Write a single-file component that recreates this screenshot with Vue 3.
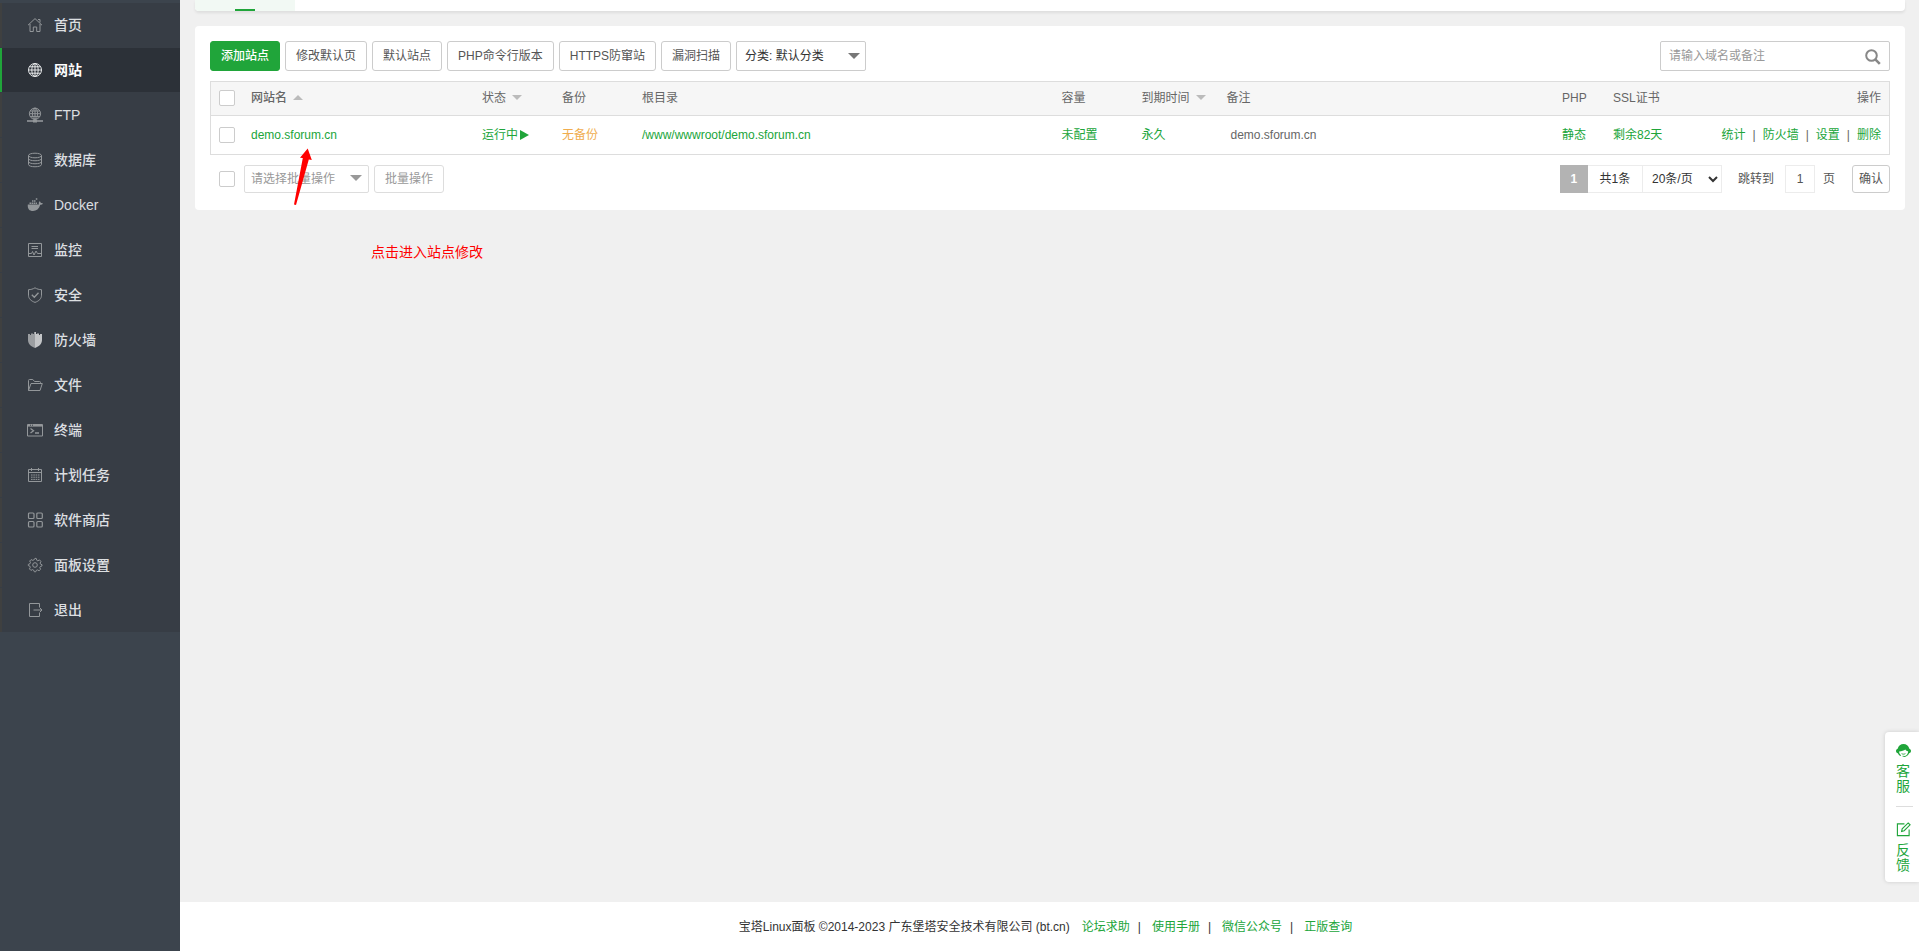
<script setup>
import { ref } from 'vue'

const menu = [
  { id: 'home', label: '首页' },
  { id: 'site', label: '网站', active: true },
  { id: 'ftp', label: 'FTP' },
  { id: 'database', label: '数据库' },
  { id: 'docker', label: 'Docker' },
  { id: 'monitor', label: '监控' },
  { id: 'safe', label: '安全' },
  { id: 'firewall', label: '防火墙' },
  { id: 'files', label: '文件' },
  { id: 'terminal', label: '终端' },
  { id: 'cron', label: '计划任务' },
  { id: 'store', label: '软件商店' },
  { id: 'settings', label: '面板设置' },
  { id: 'logout', label: '退出' }
]
const actions = ['修改默认页', '默认站点', 'PHP命令行版本', 'HTTPS防窜站', '漏洞扫描']
const operations = ['统计', '防火墙', '设置', '删除']
const footerLinks = ['论坛求助', '使用手册', '微信公众号', '正版查询']
const keyword = ref('')
const page = ref('1')
</script>

<template>
  <div class="layout">
    <aside class="sidebar">
      <nav class="menu">
        <a v-for="m in menu" :key="m.id" href="#" class="item" :class="{ active: m.active }">
          <svg class="icon" viewBox="0 0 16 16" fill="none" stroke="currentColor" stroke-width="1">
            <template v-if="m.id === 'home'">
              <path d="M1 8.2 8 1.6l7 6.6M3 7v7.5h3.3V10h3.4v4.5H13V7M11 2.5h2v3" />
            </template>
            <template v-else-if="m.id === 'site'">
              <circle cx="8" cy="8" r="6.5" />
              <ellipse cx="8" cy="8" rx="3.2" ry="6.5" />
              <path d="M8 1.5v13M1.5 8h13M2.4 4.8h11.2M2.4 11.2h11.2" />
            </template>
            <template v-else-if="m.id === 'ftp'">
              <circle cx="8" cy="6.7" r="5.6" />
              <ellipse cx="8" cy="6.7" rx="2.6" ry="5.6" />
              <path d="M8 1v11M2.4 6.7h11.2M3.2 4h9.6M3.2 9.4h9.6" />
              <path d="M0 14h16" stroke-width="1.6" />
              <path d="M6 14h4" stroke-width="3" />
            </template>
            <template v-else-if="m.id === 'database'">
              <ellipse cx="8" cy="3.5" rx="6.5" ry="2.3" />
              <path d="M1.5 3.5v9c0 3 13 3 13 0v-9M1.5 6.5c0 3 13 3 13 0M1.5 9.5c0 3 13 3 13 0" />
            </template>
            <template v-else-if="m.id === 'docker'">
              <path d="M.8 7.500H12c-.5-1.600-.1-2.600.7-3.300.8.5 1.100 1.200 1 1.900.9-.2 1.700 0 2.100.3-.4 1-1.300 1.400-2.500 1.400C12 12 9.500 14 6 14c-3.500 0-5.600-2-5.200-6.500Z" fill="currentColor" stroke="none" />
              <path d="M2.500 6.200h1.500M4.500 6.200h1.500M6.500 6.200h1.500M8.500 6.200h1.500M5 4h1.500M7 4h1.500M8.800 2h1.500" stroke-width="1.500" />
            </template>
            <template v-else-if="m.id === 'monitor'">
              <path d="M1.500 1.500h13v13h-13zM4.500 4.500h6.500M4.500 6.500h6.500M1.500 11.500h3l1-2 1.500 3.500 2-4 1.500 2.500h4" />
            </template>
            <template v-else-if="m.id === 'safe'">
              <path d="M8 .8c2 1.300 4.200 1.800 6.500 1.900v5.500c0 3.500-2.500 5.800-6.500 7.200-4-1.400-6.500-3.700-6.500-7.200V2.700C3.800 2.600 6 2.100 8 .8Z" />
              <path d="m4.800 7.800 2.500 2.500 4.200-4.600" stroke-width="1.300" />
            </template>
            <template v-else-if="m.id === 'firewall'">
              <path d="M8 0v16C3.500 14.200 1 11.800 1 8V2h2v1h1V1.500h2V2h1V0Z" fill="#9b9ea1" stroke="none" />
              <path d="M8 0h1v2h1v-.5h2V3h1V2h2v6c0 3.800-2.500 6.200-7 8Z" fill="#c3c5c7" stroke="none" />
            </template>
            <template v-else-if="m.id === 'files'">
              <path d="M1.500 13.500v-10q0-1 1-1h3.300l1.700 2h5q1 0 1 1v1M1.500 13.500 4 6.500h11.300L13 13.500Z" />
            </template>
            <template v-else-if="m.id === 'terminal'">
              <path d="M.5 2.500h15v11.500H.5z" />
              <path d="M1 3.500h14" stroke-width="2.200" />
              <path d="M3 3.200h1M5 3.200h1" stroke="#373d45" />
              <path d="m3.500 6.500 3 2.200-3 2.200M8 11h4" stroke-width="1.300" />
            </template>
            <template v-else-if="m.id === 'cron'">
              <path d="M1.500 2.500h13v12h-13zM1.500 5.500h13M4.500 1v3M11.500 1v3" />
              <path d="M4 8h8.500M4 10.200h8.500M4 12.400h8.500" stroke-dasharray="1.600 .7" />
            </template>
            <template v-else-if="m.id === 'store'">
              <g stroke-width="1.200">
                <rect x="1.500" y="1" width="5.500" height="5.500" rx="1" />
                <rect x="9.800" y="1" width="5.500" height="5.500" rx="1" />
                <rect x="1.500" y="9.500" width="5.500" height="5.500" rx="1" />
                <rect x="9.800" y="9.500" width="5.500" height="5.500" rx="1" />
              </g>
            </template>
            <template v-else-if="m.id === 'settings'">
              <circle cx="8" cy="8" r="2.300" />
              <path d="m8 1.300 1.300.2.500 1.800 1 .5 1.700-.9 1.400 1.500-.8 1.700.4 1 1.500.6v1.200l-1.700.7-.5 1 .8 1.700-1.500 1.400-1.700-.8-1 .4-.7 1.500H7.400l-.8-1.700-1-.5-1.700.8-1.400-1.500.8-1.700-.4-1-1.600-.6V7.400l1.700-.7.500-1-.8-1.700 1.400-1.400 1.700.8 1-.4Z" />
            </template>
            <template v-else>
              <path d="M12.500 5V1.500h-10v13h10V11M6.500 8H15M12.500 5.500 15 8l-2.500 2.500" />
            </template>
          </svg>
          <span>{{ m.label }}</span>
        </a>
      </nav>
    </aside>

    <div class="main">
      <main class="content">
        <div class="tabs"><span class="tab"></span></div>

        <section class="card">
          <div class="toolbar">
            <div class="group">
              <button type="button" class="btn primary">添加站点</button>
              <button v-for="a in actions" :key="a" type="button" class="btn">{{ a }}</button>
              <div class="dropdown category">
                <select aria-label="分类">
                  <option>分类: 默认分类</option>
                </select>
                <svg viewBox="0 0 12 6"><path d="M0 0h12L6 6z" fill="currentColor" /></svg>
              </div>
            </div>
            <form class="search" @submit.prevent>
              <input v-model="keyword" type="text" placeholder="请输入域名或备注" aria-label="请输入域名或备注" />
              <button type="submit" aria-label="搜索">
                <svg viewBox="0 0 16 16" fill="none" stroke="currentColor">
                  <circle cx="6.500" cy="6.500" r="5.300" stroke-width="2" />
                  <path d="m10.300 10.300 4.500 4.500" stroke-width="2.600" />
                </svg>
              </button>
            </form>
          </div>

          <div class="table-wrap">
            <table>
              <colgroup>
                <col class="c-check" /><col class="c-name" /><col class="c-mid" /><col class="c-mid" />
                <col class="c-path" /><col class="c-mid" /><col class="c-expire" /><col />
                <col class="c-php" /><col class="c-ssl" /><col class="c-ops" />
              </colgroup>
              <thead>
                <tr>
                  <th><input type="checkbox" aria-label="全选" /></th>
                  <th class="sorted">网站名<svg class="sort" viewBox="0 0 10 5"><path d="M0 5h10L5 0z" /></svg></th>
                  <th>状态<svg class="sort" viewBox="0 0 10 5"><path d="M0 0h10L5 5z" /></svg></th>
                  <th>备份</th>
                  <th>根目录</th>
                  <th>容量</th>
                  <th>到期时间<svg class="sort" viewBox="0 0 10 5"><path d="M0 0h10L5 5z" /></svg></th>
                  <th>备注</th>
                  <th>PHP</th>
                  <th>SSL证书</th>
                  <th class="right">操作</th>
                </tr>
              </thead>
              <tbody>
                <tr>
                  <td><input type="checkbox" aria-label="demo.sforum.cn" /></td>
                  <td><a href="#">demo.sforum.cn</a></td>
                  <td>
                    <a href="#" class="running">运行中<svg viewBox="0 0 9 10"><path d="M0 0v10l9-5z" fill="currentColor" /></svg></a>
                  </td>
                  <td><a href="#" class="warn">无备份</a></td>
                  <td><a href="#">/www/wwwroot/demo.sforum.cn</a></td>
                  <td><a href="#">未配置</a></td>
                  <td><a href="#">永久</a></td>
                  <td><span class="remark">demo.sforum.cn</span></td>
                  <td><a href="#">静态</a></td>
                  <td><a href="#">剩余82天</a></td>
                  <td class="right">
                    <span class="ops">
                      <template v-for="(o, i) in operations" :key="o">
                        <span v-if="i">|</span><a href="#">{{ o }}</a>
                      </template>
                    </span>
                  </td>
                </tr>
              </tbody>
            </table>
          </div>

          <div class="bottom">
            <div class="batch">
              <input type="checkbox" aria-label="选择全部" />
              <div class="dropdown bulk">
                <select aria-label="批量操作" disabled>
                  <option>请选择批量操作</option>
                </select>
                <svg viewBox="0 0 12 6"><path d="M0 0h12L6 6z" fill="currentColor" /></svg>
              </div>
              <button type="button" class="btn small" disabled>批量操作</button>
            </div>
            <div class="pager">
              <span class="current">1</span>
              <span class="total">共1条</span>
              <select class="size" aria-label="每页条数">
                <option>20条/页</option>
              </select>
              <label class="jump"><span>跳转到</span><input v-model="page" type="text" /><span>页</span></label>
              <button type="button" class="btn confirm">确认</button>
            </div>
          </div>
        </section>
      </main>

      <footer class="footer">
        <span class="copy">宝塔Linux面板 ©2014-2023 广东堡塔安全技术有限公司 (bt.cn)</span>
        <template v-for="(l, i) in footerLinks" :key="l">
          <span v-if="i" class="bar">|</span><a href="#">{{ l }}</a>
        </template>
      </footer>
    </div>

    <aside class="service">
      <a href="#">
        <svg viewBox="0 0 16 16">
          <path d="M1.800 6C2.500 2.800 5 1 8 1s5.500 1.800 6.200 5c1.200.4 1.800 1.300 1.800 2.500 0 1.300-.8 2.300-2 2.500-.8 2-2.300 3.300-4.500 3.800L7 14.500v-1l2.500.3c1.800-.6 3.300-2.300 3.500-4.800-1.500-.3-2.500-1-3-2C8.500 8.200 6 9 3.300 9c.1 1.800.8 3.200 2.200 4l-.8.800C3.300 13.200 2.400 12.200 2 11 .8 10.800 0 9.800 0 8.500 0 7.300.6 6.400 1.800 6Z" fill="currentColor" />
          <path d="M6 11.300c1.300.8 2.700.8 4 0" fill="none" stroke="currentColor" />
        </svg>
        <span>客服</span>
      </a>
      <a href="#">
        <svg viewBox="0 0 16 16" fill="none" stroke="currentColor" stroke-width="1.200">
          <path d="M9 2H1.500v12.500H14V8M6 10l.6-2.800L13 1l2 2-6.300 6.300Z" />
        </svg>
        <span>反馈</span>
      </a>
    </aside>

    <svg class="arrow" viewBox="0 0 24 60"><path d="M17.700 3.500 21.800 15l-3-.500L6 60 4 59.500 12.800 13l-2.800-.300Z" fill="#f00" /></svg>
    <p class="note">点击进入站点修改</p>
  </div>
</template>

<style>
body {
  margin: 0;
  background: #f0f0f0;
}
</style>

<style scoped>
* {
  box-sizing: border-box;
}
.layout {
  position: relative;
  display: flex;
  min-height: 100vh;
  font-family: "Liberation Sans", "Noto Sans CJK SC", sans-serif;
  font-size: 12px;
  line-height: 18px;
  color: #666;
}
a {
  color: #20a53a;
  text-decoration: none;
}
button,
input,
select {
  font: inherit;
  color: inherit;
  margin: 0;
}
.sidebar {
  flex: 0 0 180px;
  padding-top: 3px;
  background: #3c444d;
}
.menu {
  background: #373d45;
}
.item {
  display: flex;
  align-items: center;
  gap: 11px;
  height: 44px;
  margin-bottom: 1px;
  padding-left: 25px;
  border-left: 2px solid #3f4040;
  color: #dcdfe1;
  font-size: 14px;
  font-weight: 500;
}
.item.active {
  border-left-color: #20a53a;
  background: #2c3138;
  color: #fff;
  font-weight: 700;
}
.icon {
  width: 16px;
  height: 16px;
  color: #93979a;
}
.active .icon {
  color: #e6e8e9;
}
.main {
  flex: 1;
  min-width: 0;
  display: flex;
  flex-direction: column;
}
.content {
  flex: 1;
  padding: 0 14px 0 15px;
}
.tabs {
  display: flex;
  height: 11px;
  margin-bottom: 15px;
  border-radius: 0 0 4px 4px;
  background: #fff;
  box-shadow: 0 2px 3px rgba(0, 0, 0, 0.08);
}
.tab {
  display: flex;
  align-items: flex-end;
  justify-content: center;
  width: 100px;
  border-bottom-left-radius: 4px;
  background: #f2f9f4;
}
.tab::after {
  content: "";
  width: 20px;
  height: 2px;
  background: #20a53a;
}
.card {
  padding: 15px 15px 17px;
  border-radius: 4px;
  background: #fff;
}
.toolbar,
.bottom {
  display: flex;
  justify-content: space-between;
}
.group {
  display: flex;
  gap: 5px;
}
.btn {
  height: 30px;
  padding: 0 10px;
  border: 1px solid #ccc;
  border-radius: 3px;
  background: #fff;
  color: #555;
  white-space: nowrap;
}
.btn.primary {
  border-color: #20a53a;
  background: #20a53a;
  color: #fff;
  font-weight: 500;
}
.dropdown {
  position: relative;
}
.dropdown select {
  width: 100%;
  height: 100%;
  padding: 0 8px;
  border: 1px solid #ccc;
  border-radius: 2px;
  background: #fff;
  color: #333;
  appearance: none;
  opacity: 1;
}
.dropdown svg {
  position: absolute;
  top: 12px;
  right: 6px;
  width: 12px;
  height: 6px;
  color: #777;
  pointer-events: none;
}
.category {
  width: 130px;
}
.search {
  display: flex;
  align-items: center;
  width: 230px;
  height: 30px;
  border: 1px solid #ccc;
  border-radius: 2px;
}
.search input {
  flex: 1;
  min-width: 0;
  padding: 0 8px;
  border: 0;
  outline: 0;
  background: none;
}
.search input::placeholder {
  color: #999;
}
.search button {
  width: 32px;
  height: 28px;
  padding: 7px 8px;
  border: 0;
  background: none;
  color: #888;
}
.search svg {
  display: block;
  width: 16px;
  height: 16px;
}
.table-wrap {
  margin: 10px 0;
  border: 1px solid #ddd;
}
table {
  width: 100%;
  table-layout: fixed;
  border-collapse: collapse;
}
.c-check { width: 32px; }
.c-name { width: 231px; }
.c-mid { width: 80px; }
.c-path { width: 25%; }
.c-expire { width: 85px; }
.c-php { width: 51px; }
.c-ssl { width: 104px; }
.c-ops { width: 180px; }
th,
td {
  padding: 0 8px;
  text-align: left;
  font-weight: 400;
  white-space: nowrap;
}
th {
  height: 33px;
  background: #f6f6f6;
  border-bottom: 1px solid #ddd;
}
td {
  height: 39px;
}
th.sorted {
  font-weight: 500;
}
th.right,
td.right {
  text-align: right;
}
.sort {
  width: 10px;
  height: 5px;
  margin-left: 6px;
  vertical-align: 2px;
  fill: #bbb;
}
input[type="checkbox"] {
  display: block;
  width: 16px;
  height: 16px;
  border: 1px solid #ccc;
  border-radius: 2px;
  background: #fff;
  appearance: none;
}
.running {
  display: inline-flex;
  align-items: center;
  gap: 2px;
}
.running svg {
  width: 9px;
  height: 10px;
}
.warn {
  color: #f0ad4e;
}
.remark {
  padding-left: 4px;
}
.ops {
  display: inline-flex;
  gap: 7px;
}
.batch {
  display: flex;
  align-items: center;
  padding-left: 9px;
}
.bulk {
  width: 125px;
  height: 28px;
  margin: 0 5px 0 9px;
}
.bulk select {
  padding: 0 6px;
  border-color: #ddd;
  color: #999;
}
.bulk svg {
  top: 10px;
  right: 7px;
  color: #999;
}
.btn.small {
  height: 28px;
  border-color: #ddd;
  color: #999;
}
.pager {
  display: flex;
  align-items: center;
  height: 28px;
  color: #333;
}
.current,
.total {
  height: 28px;
  line-height: 26px;
  text-align: center;
}
.current {
  width: 28px;
  border: 1px solid #b3b3b3;
  background: #b3b3b3;
  color: #fff;
  font-weight: 700;
}
.total {
  width: 55px;
  border: 1px solid #ececec;
  border-left: 0;
}
.size {
  width: 79px;
  height: 28px;
  padding: 0 0 0 5px;
  border: 1px solid #ececec;
  border-left: 0;
  border-radius: 0;
  background: #fff;
}
.jump {
  display: flex;
  align-items: center;
  gap: 8px;
  margin: 0 17px 0 16px;
  color: #555;
}
.jump input {
  width: 30px;
  height: 28px;
  margin-left: 3px;
  padding: 0;
  border: 1px solid #ececec;
  text-align: center;
}
.btn.confirm {
  height: 28px;
  padding: 0 6px;
}
.footer {
  display: flex;
  align-items: center;
  justify-content: center;
  height: 49px;
  padding-right: 8px;
  background: #fff;
  color: #333;
}
.copy {
  margin-right: 12px;
}
.bar {
  margin: 0 11px 0 8px;
}
.service {
  position: absolute;
  right: 0;
  bottom: 69px;
  width: 34px;
  height: 150px;
  padding: 11px 0 0 11px;
  border-radius: 4px 0 0 4px;
  background: #fff;
  box-shadow: 0 0 4px rgba(0, 0, 0, 0.15);
}
.service a {
  display: block;
  width: 17px;
  font-size: 14px;
  line-height: 15px;
}
.service a + a {
  margin-top: 12px;
  padding-top: 15px;
  border-top: 1px solid #ddd;
}
.service svg {
  display: block;
  width: 15px;
  height: 15px;
  margin-bottom: 6px;
}
.service span {
  display: block;
  width: 14px;
}
.arrow {
  position: absolute;
  left: 290px;
  top: 145px;
  width: 24px;
  height: 60px;
}
.note {
  position: absolute;
  left: 371px;
  top: 242px;
  margin: 0;
  font-size: 14px;
  line-height: 20px;
  color: #f00;
}
</style>
